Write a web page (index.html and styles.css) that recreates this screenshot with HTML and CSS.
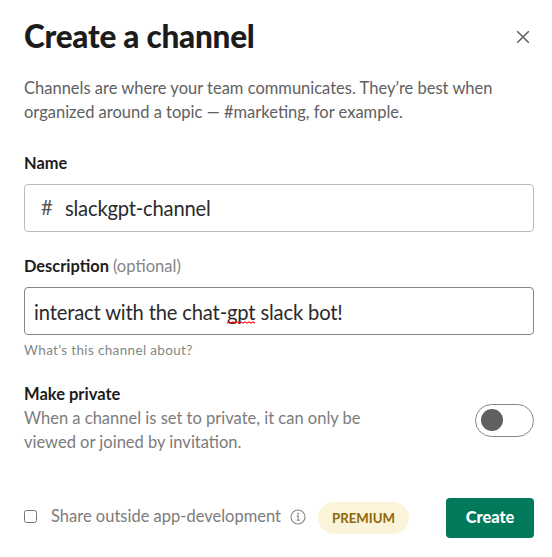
FILE: index.html
```
<!DOCTYPE html>
<html lang="en">
<head>
<meta charset="utf-8">
<title>Create a channel</title>
<link rel="stylesheet" href="styles.css">
</head>
<body>
<main class="dialog">
  <header class="header">
    <h1 class="title"><span>Create a channel</span></h1>
    <button class="close" type="button" aria-label="Close">
      <svg width="14" height="14" viewBox="0 0 14 14"><path d="M1.2 1.2 12.8 12.8M12.8 1.2 1.2 12.8"/></svg>
    </button>
  </header>
  <p class="intro"><span>Channels are where your team communicates. They’re best when</span><br><span>organized around a topic — #marketing, for example.</span></p>

  <div class="label"><span>Name</span></div>
  <div class="field field-name"><span class="hash">#</span><span>slackgpt-channel</span></div>

  <div class="label"><span>Description</span> <span class="optional">(optional)</span></div>
  <div class="field field-desc"><span>interact with the chat-<span class="misspelled">gpt<svg class="squiggle" width="28" height="3" viewBox="0 0 28 3"><path d="M0 2.2 2 .8 4 2.2 6 .8 8 2.2 10 .8 12 2.2 14 .8 16 2.2 18 .8 20 2.2 22 .8 24 2.2 26 .8 28 2.2"/></svg></span> slack bot!</span></div>
  <p class="hint"><span>What’s this channel about?</span></p>

  <section class="private">
    <div class="private-text">
      <div class="private-title"><span>Make private</span></div>
      <p class="private-copy"><span>When a channel is set to private, it can only be</span><br><span>viewed or joined by invitation.</span></p>
    </div>
    <div class="toggle"><span class="knob"></span></div>
  </section>

  <footer class="footer">
    <span class="checkbox"></span>
    <span class="share">Share outside app-development</span>
    <svg class="info" width="16" height="16" viewBox="0 0 16 16"><circle cx="8" cy="8" r="7"/><path d="M6.7 7.1H8.2V11.2M6.6 11.2H9.8"/><circle class="dot" cx="8" cy="4.7" r=".9"/></svg>
    <span class="badge"><span>PREMIUM</span></span>
    <button class="create" type="button"><span>Create</span></button>
  </footer>
</main>
</body>
</html>
```
FILE: styles.css
```
* { box-sizing: border-box; }
body {
  margin: 0;
  background: #fff;
  color: #1d1c1d;
  font-family: Lato, "Liberation Sans", sans-serif;
  font-size: 16.5px;
  line-height: 24px;
}
h1, p { margin: 0; }
button { border: 0; padding: 0; font-family: inherit; }
.dialog { width: 552px; height: 557px; padding: 16px 18px 0 24px; overflow: hidden; }
.header { display: flex; justify-content: space-between; align-items: center; height: 42px; }
.title { font-size: 31.5px; line-height: 42px; font-weight: 900; white-space: nowrap; letter-spacing: -0.25px; padding-bottom: 2px; }
.close { width: 14px; height: 14px; margin-right: 4px; background: none; display: flex; }
.close path { fill: none; stroke: #616061; stroke-width: 1.5; }
.intro { margin-top: 18px; height: 48px; color: #616061; white-space: nowrap; }
.label { margin-top: 27px; height: 24px; font-weight: 700; font-size: 16.4px; white-space: nowrap; }
.optional { color: #868686; font-weight: 400; font-size: 16.6px; }
.field { margin-top: 9px; height: 48px; border: 1px solid #bbb; border-radius: 4px; display: flex; align-items: center; font-size: 20.2px; letter-spacing: -0.2px; color: #2b2a2b; white-space: nowrap; }
.field-name { padding-left: 16px; }
.field-desc { padding-top: 1px; border-color: #868686; padding-left: 9px; letter-spacing: -0.17px; }
.hash { width: 24px; margin-top: -2px; color: #555455; }
.field + .label { margin-top: 22px; }
.misspelled { position: relative; }
.squiggle { position: absolute; left: 0; bottom: 0; }
.squiggle path { fill: none; stroke: #f00; stroke-width: 1.1; }
.hint { margin-top: 5px; height: 20px; font-size: 13.5px; line-height: 20px; letter-spacing: 0.35px; color: #868686; white-space: nowrap; }
.private { display: flex; justify-content: space-between; margin-top: 22px; height: 72px; white-space: nowrap; }
.private-title { font-weight: 700; }
.private-copy { color: #7c7b7c; }
.toggle { width: 59px; height: 33px; margin-top: 22px; padding: 4px 5px; border: 1px solid #868686; border-radius: 17px; }
.knob { display: block; width: 22px; height: 22px; border-radius: 50%; background: #616061; }
.footer { display: flex; align-items: center; margin-top: 44px; height: 40px; white-space: nowrap; }
.checkbox { width: 13px; height: 13px; margin-top: -4px; border: 1px solid #767676; border-radius: 2.5px; }
.share { width: 239px; margin-left: 14px; margin-top: -4px; color: #7c7b7c; }
.info { margin-top: -2px; }
.info circle, .info path { fill: none; stroke: #868686; stroke-width: 1.1; }
.info .dot { fill: #868686; stroke: none; }
.badge { width: 91px; height: 32px; margin-left: 12px; border-radius: 16px; background: #fbf3da; color: #8d6806; font-size: 13.2px; line-height: 32px; font-weight: 700; text-align: center; }
.create { width: 88px; height: 40px; margin-left: auto; padding-bottom: 3px; border-radius: 4px; background: #007a5a; color: #fff; font-size: 16.4px; font-weight: 900; }
```
